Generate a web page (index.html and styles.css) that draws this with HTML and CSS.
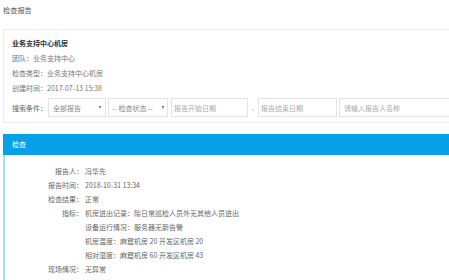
FILE: index.html
```html
<!DOCTYPE html>
<html lang="zh">
<head>
<meta charset="utf-8">
<title>检查报告</title>
<link rel="stylesheet" href="styles.css">
</head>
<body>
<div class="page">
  <div class="page-title">检查报告</div>
  <div class="card">
    <div class="card-title">业务支持中心机房</div>
    <div class="info">团队：业务支持中心</div>
    <div class="info">检查类型：业务支持中心机房</div>
    <div class="info">创建时间：2017-07-13 15:38</div>
    <div class="search">
      <span class="search-label">搜索条件：</span>
      <div class="select s1"><span>全部报告</span><i class="arrow"></i></div>
      <div class="select s2"><span>-- 检查状态 --</span><i class="arrow"></i></div>
      <div class="input i1">报告开始日期</div>
      <span class="dash">-</span>
      <div class="input i2">报告结束日期</div>
      <div class="input i3">请输入报告人名称</div>
    </div>
  </div>
  <div class="panel">
    <div class="panel-head">检查</div>
    <div class="panel-body">
      <div class="row"><div class="label">报告人：</div><div class="value">冯华先</div></div>
      <div class="row"><div class="label">报告时间：</div><div class="value">2018-10-31 13:34</div></div>
      <div class="row"><div class="label">检查结果：</div><div class="value">正常</div></div>
      <div class="row">
        <div class="label">指标：</div>
        <div class="value">
          <div>机房进出记录：除日常巡检人员外无其他人员进出</div>
          <div>设备运行情况：服务器无新告警</div>
          <div>机房温度：麻窟机房 20 开发区机房 20</div>
          <div>相对湿度：麻窟机房 60 开发区机房 43</div>
        </div>
      </div>
      <div class="row"><div class="label">现场情况：</div><div class="value">无异常</div></div>
    </div>
  </div>
</div>
</body>
</html>
```
FILE: styles.css
```css
html, body {
  margin: 0;
  padding: 0;
  overflow: hidden;
  background: #fff;
}
body {
  font-family: "Noto Sans CJK SC", "Noto Sans", sans-serif;
  font-size: 7px;
  color: #666;
}
.page {
  padding-left: 3px;
}
.page-title {
  height: 29px;
  line-height: 12px;
  padding-top: 4px;
  box-sizing: border-box;
  color: #555;
  font-size: 7.2px;
}
.card {
  border: 1px solid #ececec;
  border-right: none;
  padding: 6px 0 5px 8px;
}
.card-title {
  font-weight: bold;
  color: #333;
  line-height: 15px;
}
.info {
  line-height: 15px;
  color: #777;
}
.search {
  display: flex;
  align-items: center;
  margin-top: 2px;
  height: 19px;
  overflow: hidden;
  white-space: nowrap;
}
.search-label {
  color: #666;
  flex: 0 0 36px;
}
.select, .input {
  flex: 0 0 auto;
  height: 19px;
  box-sizing: border-box;
  border: 1px solid #e3e3e3;
  display: flex;
  align-items: center;
  padding-left: 4px;
  color: #999;
}
.select {
  justify-content: space-between;
  padding-right: 4px;
  color: #888;
}
.s1 { width: 58px; margin-right: 2px; }
.s2 { width: 60px; margin-right: 3px; padding-left: 3px; padding-right: 3px; }
.i1 { width: 77px; padding-left: 2px; }
.i2 { width: 79px; padding-left: 2px; margin-right: 2px; }
.i3 { width: 130px; }
.input { color: #aaa; }
.dash {
  flex: 0 0 10px;
  text-align: center;
  color: #999;
}
.arrow {
  flex: 0 0 auto;
  width: 0;
  height: 0;
  border-left: 1.5px solid transparent;
  border-right: 1.5px solid transparent;
  border-top: 3px solid #555;
}
.panel {
  margin-top: 11px;
}
.panel-head {
  background: #05a0e6;
  color: #fff;
  height: 21px;
  line-height: 21px;
  padding-left: 9px;
}
.panel-body {
  border-left: 2px solid #a9ddf4;
  padding-top: 9px;
  padding-bottom: 4px;
}
.row {
  display: flex;
  line-height: 14px;
}
.label {
  width: 78px;
  text-align: right;
  margin-right: 2px;
  color: #666;
}
.value {
  color: #666;
}
```
